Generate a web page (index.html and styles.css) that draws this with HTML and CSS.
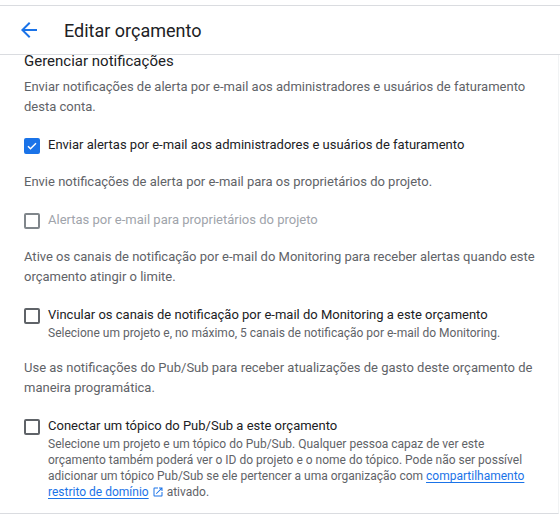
FILE: index.html
```html
<!DOCTYPE html>
<html lang="pt-BR">
<head>
<meta charset="utf-8">
<title>Editar orçamento</title>
<link rel="stylesheet" href="styles.css">
</head>
<body>
<div class="page">
  <header class="header">
    <button class="back" aria-label="Voltar">
      <svg width="24" height="24" viewBox="0 0 24 24"><path d="M20 11H7.83l5.59-5.59L12 4l-8 8 8 8 1.41-1.41L7.83 13H20v-2z" fill="#1a73e8"/></svg>
    </button>
    <h1 class="title">Editar orçamento</h1>
  </header>
  <div class="scroll">
    <div class="content">
      <h2 class="heading">Gerenciar notificações</h2>
      <p class="desc">Enviar notificações de alerta por e-mail aos administradores e usuários de faturamento desta conta.</p>
      <div class="option">
        <span class="box checked">
          <svg width="12" height="12" viewBox="0 0 24 24"><path d="M4 12.5l5 5L20 6.5" fill="none" stroke="#fff" stroke-width="3"/></svg>
        </span>
        <div class="opt-text"><div class="label">Enviar alertas por e-mail aos administradores e usuários de faturamento</div></div>
      </div>
      <p class="desc">Envie notificações de alerta por e-mail para os proprietários do projeto.</p>
      <div class="option disabled">
        <span class="box"></span>
        <div class="opt-text"><div class="label">Alertas por e-mail para proprietários do projeto</div></div>
      </div>
      <p class="desc">Ative os canais de notificação por e-mail do Monitoring para receber alertas quando este orçamento atingir o limite.</p>
      <div class="option">
        <span class="box"></span>
        <div class="opt-text">
          <div class="label">Vincular os canais de notificação por e-mail do Monitoring a este orçamento</div>
          <div class="sub">Selecione um projeto e, no máximo, 5 canais de notificação por e-mail do Monitoring.</div>
        </div>
      </div>
      <p class="desc">Use as notificações do Pub/Sub para receber atualizações de gasto deste orçamento de maneira programática.</p>
      <div class="option">
        <span class="box"></span>
        <div class="opt-text">
          <div class="label">Conectar um tópico do Pub/Sub a este orçamento</div>
          <div class="sub">Selecione um projeto e um tópico do Pub/Sub. Qualquer pessoa capaz de ver este orçamento também poderá ver o ID do projeto e o nome do tópico. Pode não ser possível adicionar um tópico Pub/Sub se ele pertencer a uma organização com <a class="link" href="#">compartilhamento restrito de domínio</a><svg class="ext" width="12" height="12" viewBox="0 0 24 24"><path d="M19 19H5V5h7V3H5a2 2 0 0 0-2 2v14a2 2 0 0 0 2 2h14c1.1 0 2-.9 2-2v-7h-2v7zM14 3v2h3.59l-9.83 9.83 1.41 1.41L19 6.41V10h2V3h-7z" fill="#1a73e8"/></svg>ativado.</div>
        </div>
      </div>
    </div>
  </div>
</div>
</body>
</html>
```

FILE: styles.css
```css
* { box-sizing: border-box; }
html, body { margin: 0; padding: 0; background: #fff; }
body {
  font-family: Roboto, "Noto Sans", Arial, sans-serif;
  color: #202124;
  width: 560px;
  height: 517px;
  overflow: hidden;
}
.page {
  padding-top: 5px;
}
.header {
  height: 50px;
  border-top: 1px solid #dadce0;
  border-bottom: 1px solid #dadce0;
  display: flex;
  align-items: center;
  padding-left: 17px;
}
.back {
  width: 24px;
  height: 24px;
  padding: 0;
  border: 0;
  background: none;
  display: flex;
  margin-right: 23px;
}
.title {
  margin: 0;
  font-size: 18px;
  font-weight: 400;
  color: #202124;
}
.scroll {
  height: 459px;
  overflow: hidden;
  border-bottom: 1px solid #dadce0;
  border-right: 1px solid #f1f3f4;
  width: 559px;
}
.content {
  padding-left: 24px;
  padding-right: 20px;
  margin-top: -6px;
}
.heading {
  margin: 0 0 4px;
  font-size: 15px;
  font-weight: 400;
  line-height: 24px;
}
.desc {
  margin: 0;
  font-size: 13px;
  line-height: 20px;
  color: #5f6368;
}
.option {
  display: flex;
  align-items: flex-start;
  margin: 18px 0 17px;
}
.box {
  flex: none;
  width: 16px;
  height: 16px;
  margin-top: 3px;
  margin-right: 8px;
  border: 2px solid #5f6368;
  border-radius: 2px;
  display: flex;
  align-items: center;
  justify-content: center;
}
.box.checked {
  background: #1a73e8;
  border-color: #1a73e8;
}
.disabled .box { border-color: #80868b; }
.disabled .label { color: #a0a4ab; }
.label {
  font-size: 13px;
  line-height: 20px;
  color: #202124;
}
.sub {
  font-size: 12px;
  line-height: 16px;
  color: #5f6368;
}
.link {
  color: #1a73e8;
  text-decoration: underline;
  text-underline-offset: 2px;
}
.ext {
  vertical-align: -2px;
  margin: 0 3px 0 3px;
}
```
